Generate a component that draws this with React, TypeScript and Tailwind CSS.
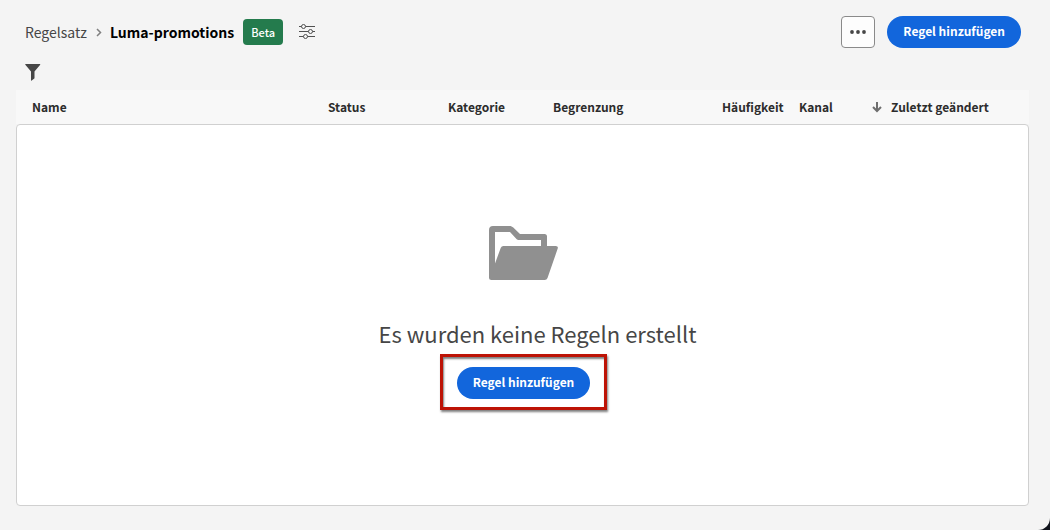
import React from 'react';

type Column = { label: string; width: string; sorted?: boolean };

const columns: Column[] = [
  { label: 'Name', width: '' },
  { label: 'Status', width: 'w-[120px]' },
  { label: 'Kategorie', width: 'w-[105px]' },
  { label: 'Begrenzung', width: 'w-[169px]' },
  { label: 'Häufigkeit', width: 'w-[77px]' },
  { label: 'Kanal', width: 'w-[72px]' },
  { label: 'Zuletzt geändert', width: 'w-[174px]', sorted: true },
];

function AddRuleButton() {
  return (
    <button
      type="button"
      className="flex h-8 items-center rounded-full bg-[#1266dc] px-4 pb-[2px] text-xs leading-5 font-bold whitespace-nowrap text-white"
    >
      Regel hinzufügen
    </button>
  );
}

function SlidersIcon() {
  return (
    <svg width="16" height="16" viewBox="0 0 16 16" fill="none" stroke="#505050" aria-hidden="true">
      <path d="M0 2.500h2.500M6.500 2.500H16M0 7.500h9.500M13.500 7.500H16M0 12.500h4.500M8.500 12.500H16" />
      <circle cx="4.500" cy="2.500" r="2" />
      <circle cx="11.500" cy="7.500" r="2" />
      <circle cx="6.500" cy="12.500" r="2" />
    </svg>
  );
}

function FunnelIcon() {
  return (
    <svg width="16" height="17" viewBox="0 0 16 17" fill="#464646" aria-hidden="true">
      <path d="M.7 0h14.100a.5.5 0 0 1 .4.8L9.500 7.600v6.500a.6.6 0 0 1-.2.450L6.700 16.600a.4.4 0 0 1-.7-.3V7.600L.3.800A.5.5 0 0 1 .7 0Z" />
    </svg>
  );
}

function FolderIcon() {
  return (
    <svg width="69" height="54" viewBox="0 0 69 54" aria-hidden="true">
      <path
        fill="#909090"
        fillRule="evenodd"
        d="M4 0H20.500C22 0 23.300.6 24.300 1.600L31 8H55.500Q58 8 58 10.500V20H66.800Q69.500 20 68.700 22.600L58.500 52Q57.800 54 55.700 54H2.500Q0 54 0 51.500V4Q0 0 4 0ZM6 6V37.500L11.800 21.700Q12.500 20 14.400 20H52V14H29.500Q28.500 14 27.700 13.200L21 6Z"
      />
    </svg>
  );
}

export default function App() {
  return (
    <div className="bg-[#10141c]">
      <main className="flex min-h-screen flex-col rounded-br-xl bg-[#f4f4f4] pt-4 pr-[21px] pb-6 pl-4 font-['Noto_Sans_CJK_SC','Noto_Sans',sans-serif] text-[#2c2c2c]">
        <header className="flex items-center justify-between pr-2 pl-[9px]">
          <div className="flex items-center">
            <nav aria-label="Brotkrumen" className="flex items-center text-sm leading-5">
              <a href="#regelsatz" className="text-[#464646]">
                Regelsatz
              </a>
              <svg className="mr-2 ml-[9px] h-[9px] w-[6px]" viewBox="0 0 6 9" fill="none" stroke="#808080" strokeWidth="1.500" aria-hidden="true">
                <path d="M1 1l3.500 3.500L1 8" />
              </svg>
              <h1 className="font-bold text-black">Luma-promotions</h1>
            </nav>
            <span className="ml-[9px] flex h-[26px] w-10 items-center justify-center rounded bg-[#247b4d] pb-px text-[11px] leading-4 font-medium text-white">
              Beta
            </span>
            <button type="button" aria-label="Einstellungen" className="ml-4">
              <SlidersIcon />
            </button>
          </div>
          <div className="flex items-center gap-3">
            <button
              type="button"
              aria-label="Weitere Aktionen"
              className="flex h-8 w-[34px] items-center justify-center rounded border border-[#8a8a8a] bg-[#fdfdfd]"
            >
              <svg width="16" height="4" viewBox="0 0 16 4" fill="#464646" aria-hidden="true">
                <circle cx="2" cy="2" r="1.900" />
                <circle cx="8" cy="2" r="1.900" />
                <circle cx="14" cy="2" r="1.900" />
              </svg>
            </button>
            <AddRuleButton />
          </div>
        </header>

        <div className="flex pt-4 pl-[9px]">
          <button type="button" aria-label="Filter">
            <FunnelIcon />
          </button>
        </div>

        <table className="mt-[9px] w-full table-fixed border-collapse bg-[#f8f8f8] text-left text-xs leading-4">
          <thead>
            <tr className="h-[34px]">
              {columns.map((column) => (
                <th key={column.label} scope="col" className={`${column.width} pl-4 font-bold whitespace-nowrap`}>
                  {column.sorted ? (
                    <span className="flex items-center gap-2">
                      <svg width="12" height="12" viewBox="0 0 12 12" fill="none" stroke="#6e6e6e" strokeWidth="2" aria-hidden="true">
                        <path d="M6 1v8.500M2 6l4 4 4-4" />
                      </svg>
                      {column.label}
                    </span>
                  ) : (
                    column.label
                  )}
                </th>
              ))}
            </tr>
          </thead>
        </table>

        <section className="flex flex-1 flex-col items-center justify-center rounded border border-[#d0d0d0] bg-white pt-[6px] pl-[2px]">
          <FolderIcon />
          <h2 className="mt-[37px] pl-7 text-[22px] leading-8 text-[#464646]">
            Es wurden keine Regeln erstellt
          </h2>
          <div className="mt-[5px] border-3 border-[#bd1306] px-[14px] pt-[10px] pb-2 shadow-[1px_2px_2px_#00000080,inset_1px_2px_2px_#00000080]">
            <AddRuleButton />
          </div>
        </section>
      </main>
    </div>
  );
}
